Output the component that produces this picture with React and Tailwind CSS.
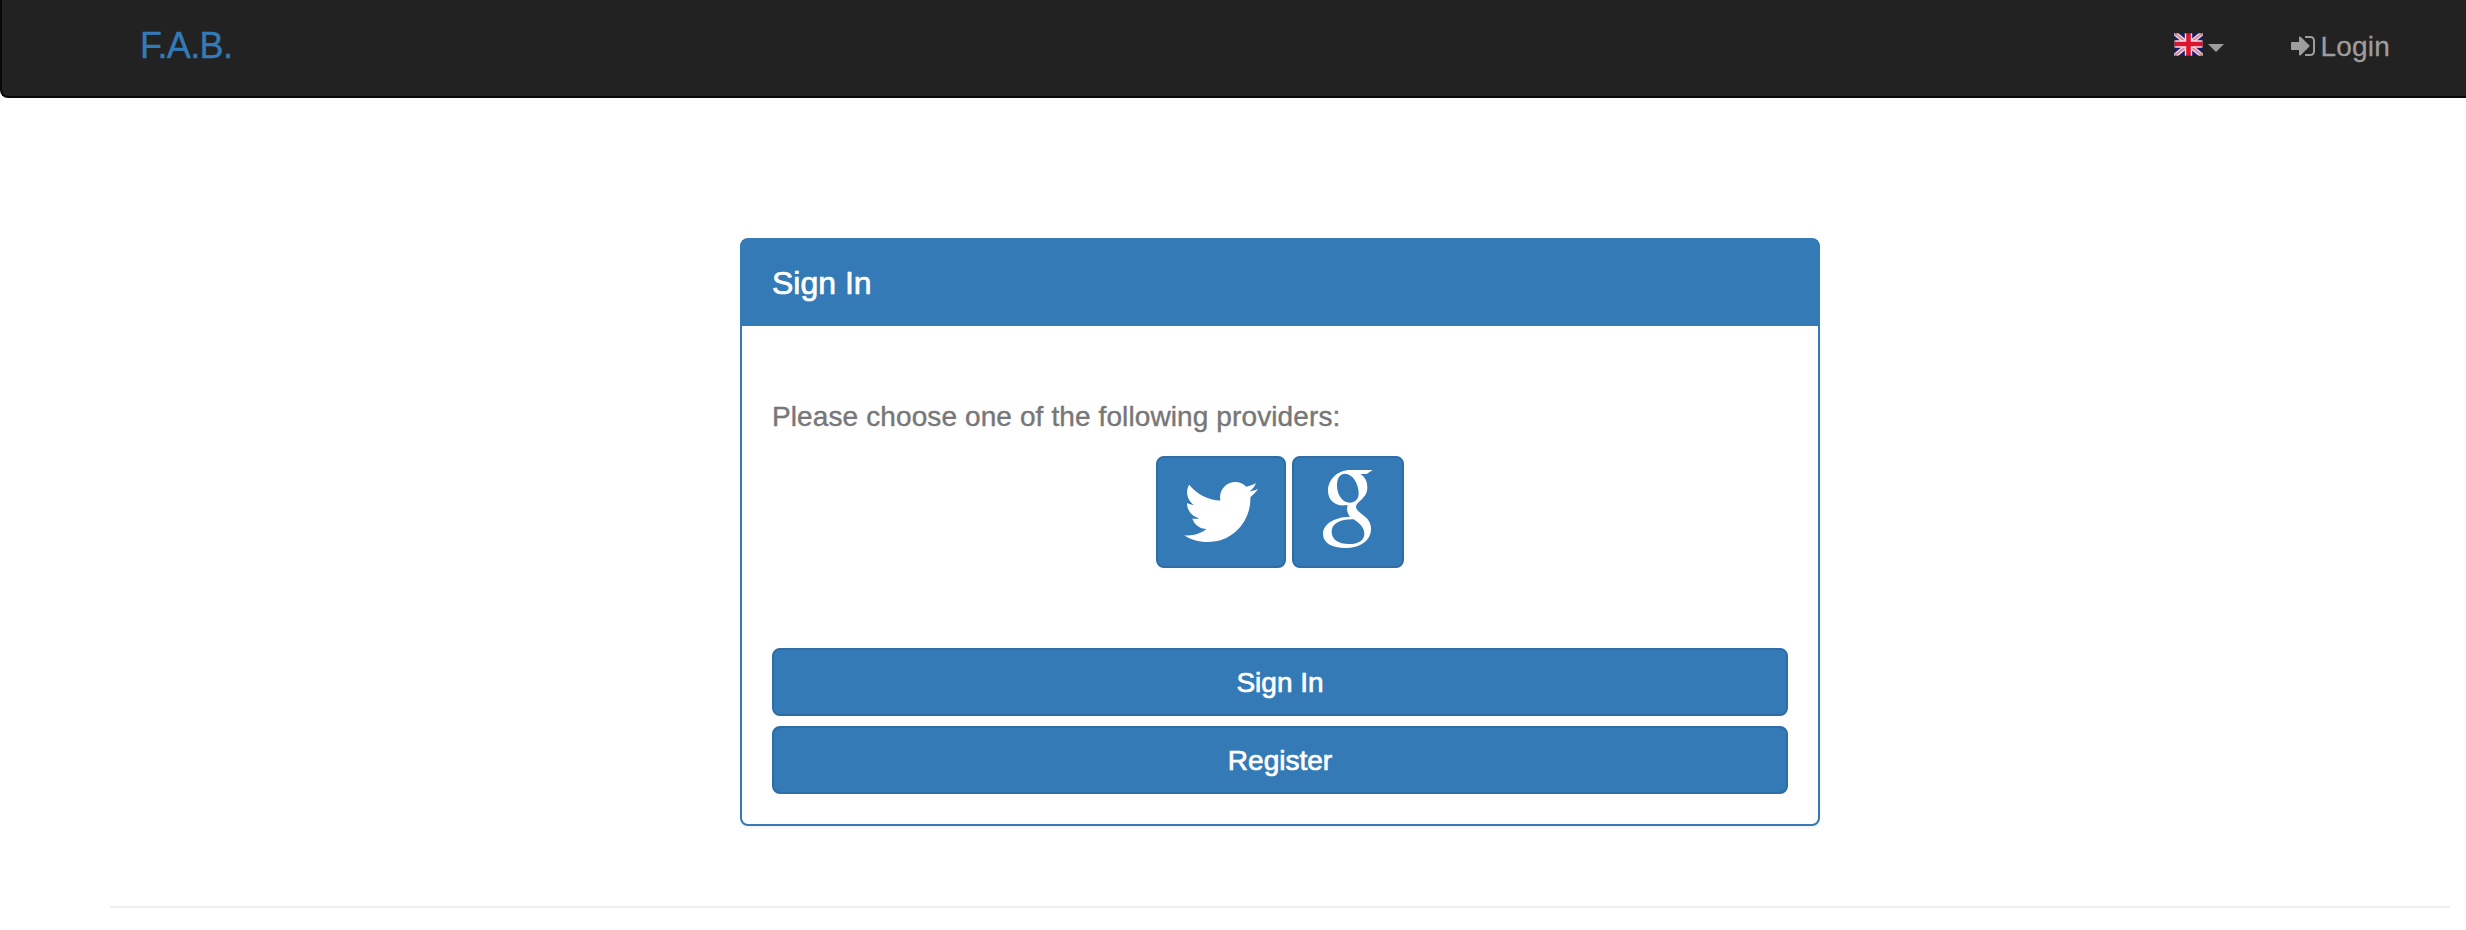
import { FaTwitter } from "react-icons/fa";

function FlagGB() {
  return (
    <svg className="mr-px h-[23px] w-[29px]" viewBox="0 0 28 23">
      <rect width="28" height="23" fill="#181a6e" />
      <path d="M0 0L28 23M28 0L0 23" stroke="#ead9e6" strokeWidth="4.6" />
      <path d="M0 0L28 23M28 0L0 23" stroke="#e0808f" strokeWidth="1.8" />
      <path d="M14 0V23M0 11H28" stroke="#f7dfe5" strokeWidth="7.4" />
      <path d="M14 0V23M0 11H28" stroke="#dc1430" strokeWidth="4.6" />
      <rect x=".5" y=".5" width="27" height="22" fill="none" stroke="#222" strokeOpacity=".3" />
    </svg>
  );
}

function SignInIcon() {
  return (
    <svg className="h-7 w-7" viewBox="0 0 1792 1792" fill="currentColor">
      <path d="M1312 896q0 26-19 45l-544 544q-19 19-45 19t-45-19-19-45v-288h-448q-26 0-45-19t-19-45v-384q0-26 19-45t45-19h448v-288q0-26 19-45t45-19 45 19l544 544q19 19 19 45zm352-352v704q0 119-84.500 203.500t-203.500 84.500h-320q-13 0-22.500-9.500t-9.500-22.500q0-4-1-20t-.5-26.500 3-23.500 10-19.500 20.500-6.500h320q66 0 113-47t47-113v-704q0-66-47-113t-113-47h-312l-11.500-1-11.500-3-8-5.500-7-9-2-13.500q0-4-1-20t-.5-26.500 3-23.500 10-19.500 20.500-6.500h320q119 0 203.500 84.500t84.500 203.500z" />
    </svg>
  );
}

function GoogleIcon() {
  return (
    <svg className="h-[108px] w-[108px]" viewBox="462 54 324 324" fill="#fff">
      <path
        fillRule="evenodd"
        d="M698 90H632C590 90 564 121 564 152C564 181 587 198 613 196L623 195C620 206 620 218 630 230C583 231 549 252 549 282C549 309 578 324 614 324C662 324 693 301 693 266C693 247 683 235 668 224C655 214 648 208 648 201C648 193 654 188 664 179C676 168 682 158 682 142C682 123 674 110 661 102H680ZM615 101C637 101 656 130 656 160C656 178 645 188 629 188C606 188 591 163 591 136C591 116 599 101 615 101ZM641 238C661 252 673 263 673 281C673 301 655 312 627 312C594 312 575 297 575 275C575 250 601 237 641 238Z"
      />
    </svg>
  );
}

const button =
  "flex items-center justify-center rounded-lg border-2 border-[#2e6da4] bg-[#337ab7] text-white";

export default function App() {
  return (
    <div className="h-[930px] w-full overflow-hidden bg-white font-['Liberation_Sans',Arial,sans-serif] text-[28px] leading-10">
      <nav className="flex h-[98px] items-start justify-between rounded-bl-lg border-b-2 border-l-2 border-[#080808] bg-[#222] pr-[76px] pl-[138px]">
        <a className="pt-[26px] text-[36px] tracking-[-0.6px] text-[#337ab7] [-webkit-text-stroke:0.4px_#337ab7]">
          F.A.B.
        </a>
        <div className="flex text-[#9d9d9d]">
          <a className="flex pt-[33px]">
            <FlagGB />
            <svg className="mt-[11px] ml-1 h-2 w-4" viewBox="0 0 16 8" fill="currentColor">
              <path d="M0 0H16L8 8Z" />
            </svg>
          </a>
          <a className="ml-[65px] flex pt-[26px] [-webkit-text-stroke:0.3px_#9d9d9d]">
            <span className="mt-[6px] mr-[3px]">
              <SignInIcon />
            </span>
            <span className="pt-px tracking-[0.2px]">Login</span>
          </a>
        </div>
      </nav>

      <main className="mt-[140px] ml-[740px] h-[588px] w-[1080px] rounded-lg border-2 border-[#337ab7] bg-white shadow-[0_2px_2px_rgba(0,0,0,0.05)]">
        <h1 className="h-[86px] bg-[#337ab7] px-[30px] pt-[23px] text-[32px] text-white [-webkit-text-stroke:0.7px_white]">
          Sign In
        </h1>
        <div className="px-[30px] pt-[70px]">
          <p className="pt-px tracking-[0.11px] text-[#777] [-webkit-text-stroke:0.4px_#777]">
            Please choose one of the following providers:
          </p>
          <div className="mt-[19px] flex justify-center gap-1.5">
            <button className={`${button} h-[112px] w-[130px]`}>
              <FaTwitter className="h-[74px] w-[74px]" />
            </button>
            <button className={`${button} h-[112px] w-[112px]`}>
              <GoogleIcon />
            </button>
          </div>
          <div className="mt-20 flex flex-col gap-2.5 [-webkit-text-stroke:0.7px_white]">
            <button className={`${button} h-[68px] w-full pt-0.5`}>Sign In</button>
            <button className={`${button} h-[68px] w-full pt-0.5`}>Register</button>
          </div>
        </div>
      </main>

      <hr className="mt-20 mr-4 ml-[110px] border-t-2 border-[#eee]" />
    </div>
  );
}
